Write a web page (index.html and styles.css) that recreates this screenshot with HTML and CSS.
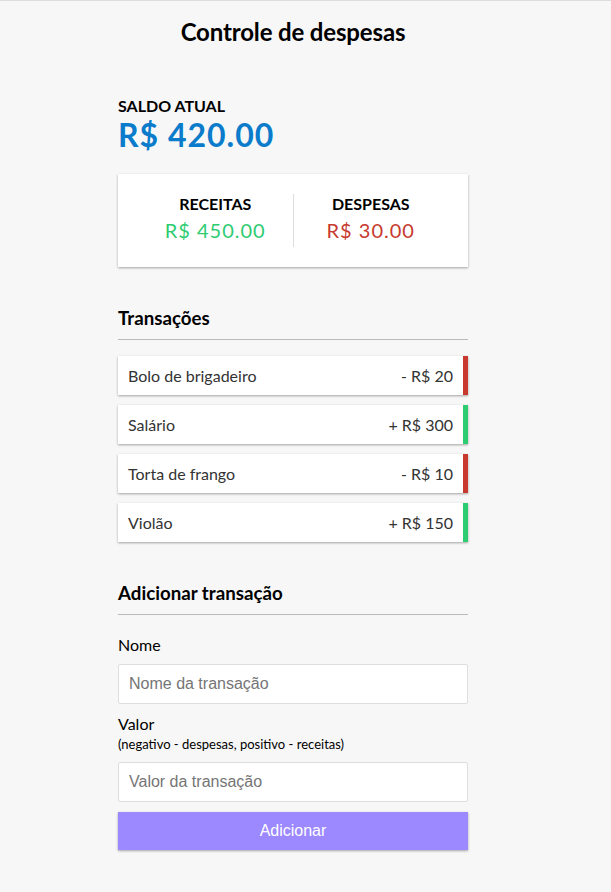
FILE: index.html
```html
<!DOCTYPE html>
<html lang="pt-BR">
<head>
<meta charset="UTF-8">
<title>Controle de despesas</title>
<link rel="stylesheet" href="styles.css">
</head>
<body>
  <h2 class="title">Controle de despesas</h2>
  <div class="container">
    <h4>Saldo atual</h4>
    <h1 class="balance">R$ 420.00</h1>

    <div class="inc-exp-container">
      <div>
        <h4>Receitas</h4>
        <p class="money plus">R$ 450.00</p>
      </div>
      <div>
        <h4>Despesas</h4>
        <p class="money minus">R$ 30.00</p>
      </div>
    </div>

    <h3>Transações</h3>
    <ul class="list">
      <li class="minus">Bolo de brigadeiro <span>- R$ 20</span></li>
      <li class="plus">Salário <span>+ R$ 300</span></li>
      <li class="minus">Torta de frango <span>- R$ 10</span></li>
      <li class="plus">Violão <span>+ R$ 150</span></li>
    </ul>

    <h3>Adicionar transação</h3>
    <form class="form">
      <div class="form-control">
        <label for="text">Nome</label>
        <input type="text" id="text" placeholder="Nome da transação">
      </div>
      <div class="form-control">
        <label for="amount">Valor <br><small>(negativo - despesas, positivo - receitas)</small></label>
        <input type="number" id="amount" placeholder="Valor da transação">
      </div>
      <button class="btn" type="button">Adicionar</button>
    </form>
  </div>
</body>
</html>
```
FILE: styles.css
```css
* {
  box-sizing: border-box;
}

html {
  border-top: 1px solid #dddddd;
}

body {
  background-color: #f7f7f7;
  display: flex;
  flex-direction: column;
  align-items: center;
  justify-content: center;
  min-height: 100vh;
  margin: 0;
  padding-right: 25px;
  font-family: Lato, "Open Sans", sans-serif;
}

.title {
  font-size: 24px;
  letter-spacing: -0.15px;
  margin: 16px 0 20px;
}

.container {
  margin: 30px auto;
  width: 350px;
}

h1 {
  letter-spacing: 1px;
  margin: 0;
}

.balance {
  color: #0b7bcb;
  font-size: 32px;
}

h3 {
  border-bottom: 1px solid #bbb;
  padding-bottom: 10px;
  margin: 40px 0 10px;
  font-size: 18.72px;
}

h4 {
  margin: 0;
  text-transform: uppercase;
  font-size: 16px;
}

.inc-exp-container {
  background-color: #fff;
  box-shadow: 0 1px 3px rgba(0, 0, 0, 0.12), 0 1px 2px rgba(0, 0, 0, 0.24);
  padding: 20px;
  display: flex;
  justify-content: space-between;
  margin: 20px 0;
}

.inc-exp-container > div {
  flex: 1;
  text-align: center;
}

.inc-exp-container > div:first-of-type {
  border-right: 1px solid #dedede;
}

.money {
  font-size: 20px;
  letter-spacing: 1px;
  margin: 5px 0;
}

.money.plus {
  color: #2ecc71;
}

.money.minus {
  color: #c83a2e;
}

label {
  display: inline-block;
  margin: 10px 0;
}

small {
  font-size: 13px;
}

input {
  border: 1px solid #dedede;
  border-radius: 2px;
  display: block;
  font-family: "Liberation Sans", Arial, sans-serif;
  font-size: 16px;
  padding: 10px;
  width: 100%;
  background: #fff;
}

input::placeholder {
  color: #757575;
}

.btn {
  cursor: pointer;
  background-color: #9c88ff;
  box-shadow: 0 1px 3px rgba(0, 0, 0, 0.12), 0 1px 2px rgba(0, 0, 0, 0.24);
  color: #fff;
  border: 0;
  display: block;
  font-family: "Liberation Sans", Arial, sans-serif;
  font-size: 16px;
  margin: 10px 0 30px;
  padding: 10px;
  width: 100%;
}

.list {
  list-style-type: none;
  padding: 0;
  margin-bottom: 40px;
}

.list li {
  background-color: #fff;
  box-shadow: 0 1px 3px rgba(0, 0, 0, 0.12), 0 1px 2px rgba(0, 0, 0, 0.24);
  color: #333;
  display: flex;
  justify-content: space-between;
  padding: 10px;
  margin: 10px 0;
}

.list li.plus {
  border-right: 5px solid #2ecc71;
}

.list li.minus {
  border-right: 5px solid #c83a2e;
}
```
